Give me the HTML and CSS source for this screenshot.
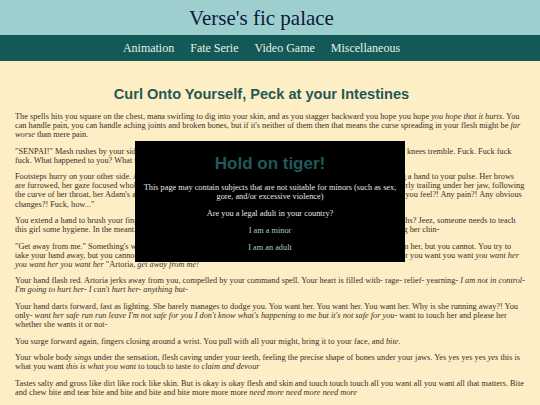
FILE: index.html
```html
<!DOCTYPE html>
<html lang="en">
<head>
<meta charset="utf-8">
<title>Curl Onto Yourself, Peck at your Intestines - Verse's fic palace</title>
<link rel="stylesheet" href="styles.css">
</head>
<body>
<header class="site-head">
  <div class="brand">Verse's fic palace</div>
  <nav class="main-nav">
    <a href="#">Animation</a>
    <a href="#">Fate Serie</a>
    <a href="#">Video Game</a>
    <a href="#">Miscellaneous</a>
  </nav>
</header>

<main class="story">
  <h1 class="story-title">Curl Onto Yourself, Peck at your Intestines</h1>

  <p>The spells hits you square on the chest, mana swirling to dig into your skin, and as you stagger backward you hope you hope <em>you hope that it hurts</em>. You can handle pain, you can handle aching joints and broken bones, but if it's neither of them then that means the curse spreading in your flesh might be <em>far worse</em> than mere pain.</p>

  <p>"SENPAI!" Mash rushes by your side, catching you before you hit the ground, her shield clattering so noisily, as your knees tremble. Fuck. Fuck fuck fuck. What happened to you? What was that spell? Who cast it?</p>

  <p>Footsteps hurry on your other side. Artoria drops to her knees beside you, her armour clanking on the stones, pressing a hand to your pulse. Her brows are furrowed, her gaze focused wholly on your pale face. Her other hand moves up along your neck, her fingers tenderly trailing under her jaw, following the curve of her throat, her Adam's apple. "Senpai! Senpai! Master, can you hear me?! Say anything! Please! How do you feel?! Any pain?! Any obvious changes?! Fuck, how..."</p>

  <p>You extend a hand to brush your fingers through her messy hair. When was the last time she washed it? Weeks? Months? Jeez, someone needs to teach this girl some hygiene. In the meantime, your hand gingerly trails down her face, down her cheeks, and stops, cupping her chin-</p>

  <p>"Get away from me." Something's wrong. Something's very, very wrong. You need to take a step back, pull away from her, but you cannot. You try to take your hand away, but you cannot, you cannot, your fingers will not listen, you want her you want her you want her you want you want <em>you want her you want her you want her</em> "Artoria, <em>get away from me!</em></p>

  <p>Your hand flash red. Artoria jerks away from you, compelled by your command spell. Your heart is filled with- rage- relief- yearning- <em>I am not in control- I'm going to hurt her- I can't hurt her- anything but-</em></p>

  <p>Your hand darts forward, fast as lighting. She barely manages to dodge you. You want her. You want her. You want her. Why is she running away?! You only- <em>want her safe run run leave I'm not safe for you I don't know what's happening to me but it's not safe for you</em>- want to touch her and please her whether she wants it or not-</p>

  <p>You surge forward again, fingers closing around a wrist. You pull with all your might, bring it to your face, and <em>bite</em>.</p>

  <p>Your whole body <em>sings</em> under the sensation, flesh caving under your teeth, feeling the precise shape of bones under your jaws. Yes yes yes yes <em>yes</em> this is what you want <em>this is what you want</em> to touch to taste <em>to claim and devour</em></p>

  <p>Tastes salty and gross like dirt like rock like skin. But is okay is okay flesh and skin and touch touch touch all you want all you want all that matters. Bite and chew bite and tear bite and bite and bite and bite more more more <em>need more need more need more</em></p>
</main>

<div class="age-gate" role="dialog" aria-labelledby="gate-title">
  <h2 id="gate-title" class="gate-title">Hold on tiger!</h2>
  <p>This page may contain subjects that are not suitable for minors (such as sex, gore, and/or excessive violence)</p>
  <p>Are you a legal adult in your country?</p>
  <a class="gate-choice" href="#">I am a minor</a>
  <a class="gate-choice" href="#">I am an adult</a>
</div>
</body>
</html>
```

FILE: styles.css
```css
html, body {
  margin: 0;
  padding: 0;
}

body {
  background: #feeec5;
  color: #35302a;
  font-family: "Liberation Serif", "Times New Roman", serif;
}

/* site header: title band + navigation band */
.site-head {
  text-align: center;
}

.brand {
  background: #9ecfcf;
  color: #0c1a3a;
  font-size: 21px;
  height: 35px;
  line-height: 36px;
  padding-right: 17px;
}

.main-nav {
  background: #135957;
  height: 26px;
  padding-right: 17px;
  display: flex;
  justify-content: center;
  align-items: center;
  gap: 16px;
}

.main-nav a {
  color: #e8f0e8;
  text-decoration: none;
  font-size: 12px;
}

/* story body */
.story {
  padding: 0 15px;
}

.story-title {
  font-family: "Liberation Sans", Arial, sans-serif;
  font-weight: bold;
  font-size: 14.6px;
  line-height: 17px;
  color: #1f5a55;
  text-align: center;
  margin: 25px 17px 9px 0;
}

.story p {
  font-size: 8.306px;
  line-height: 9.1px;
  margin: 7.4px 0;
}

/* age confirmation dialog */
.age-gate {
  position: fixed;
  left: 135px;
  top: 141px;
  width: 270px;
  box-sizing: border-box;
  padding: 0 6px 3px;
  background: #000;
  color: #e6e6e6;
  text-align: center;
}

.gate-title {
  font-family: "Liberation Sans", Arial, sans-serif;
  font-size: 17px;
  line-height: 20px;
  color: #1f5a5a;
  margin: 13px 0 9px;
}

.age-gate p {
  font-size: 8.306px;
  line-height: 9.2px;
  margin: 7.6px 0;
}

.gate-choice {
  display: block;
  color: #a7c8c2;
  text-decoration: none;
  font-size: 8.306px;
  line-height: 9.2px;
  margin: 7.6px 0;
}
```
